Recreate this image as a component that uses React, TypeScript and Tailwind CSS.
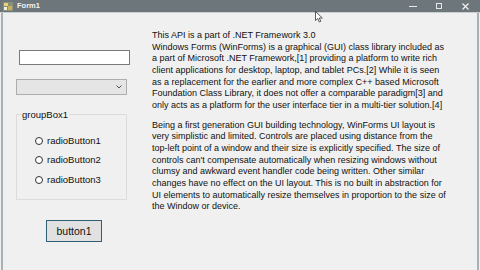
import React from "react";

const p1 = [
  "This API is a part of .NET Framework 3.0",
  "Windows Forms (WinForms) is a graphical (GUI) class library included as",
  "a part of Microsoft .NET Framework,[1] providing a platform to write rich",
  "client applications for desktop, laptop, and tablet PCs.[2] While it is seen",
  "as a replacement for the earlier and more complex C++ based Microsoft",
  "Foundation Class Library, it does not offer a comparable paradigm[3] and",
  "only acts as a platform for the user interface tier in a multi-tier solution.[4]",
];
const p2 = [
  "Being a first generation GUI building technology, WinForms UI layout is",
  "very simplistic and limited. Controls are placed using distance from the",
  "top-left point of a window and their size is explicitly specified. The size of",
  "controls can't compensate automatically when resizing windows without",
  "clumsy and awkward event handler code being written. Other similar",
  "changes have no effect on the UI layout. This is no built in abstraction for",
  "UI elements to automatically resize themselves in proportion to the size of",
  "the Window or device.",
];

function Radio({ label }: { label: string }) {
  return (
    <div className="flex items-center h-[11px]">
      <span className="w-[8px] h-[8px] rounded-full border border-[#333] bg-white" />
      <span className="ml-[4px]">{label}</span>
    </div>
  );
}

export default function App() {
  return (
    <div
      className="relative w-[480px] h-[270px] bg-[#f0f0f0] flex flex-col overflow-hidden text-[#111]"
      style={{ fontFamily: '"Liberation Sans", Arial, sans-serif' }}
    >
      {/* title bar */}
      <div className="h-[13px] bg-[#6d767b] flex items-center border-b border-[#c9ced1]">
        <svg className="ml-[3px]" width="10" height="9" viewBox="0 0 10 9">
          <rect x="0" y="0" width="10" height="9" fill="#8a8f7a" />
          <rect x="1" y="1" width="4" height="3" fill="#e8d27a" />
          <rect x="5" y="4" width="4" height="4" fill="#c9b25a" />
          <rect x="1" y="5" width="3" height="3" fill="#f0f0e0" />
        </svg>
        <span className="ml-[4px] text-[7.5px] leading-none text-[#f4f4f4] font-bold">Form1</span>
        <div className="ml-auto flex items-center h-full">
          <div className="w-[8px] h-[1px] bg-[#e8e8e8] mr-[19px] mt-[1px]" />
          <div className="w-[6px] h-[6px] border border-[#e8e8e8] mr-[20px]" />
          <svg width="7" height="7" viewBox="0 0 7 7" className="mr-[11px]">
            <path d="M0.5 0.5 L6.5 6.5 M6.5 0.5 L0.5 6.5" stroke="#f0f0f0" strokeWidth="1.2" />
          </svg>
        </div>
      </div>
      {/* body */}
      <div className="flex-1 flex border-l-2 border-r-2 border-[#aab1b6] ml-[1px] mr-[1px] text-[9.5px] leading-[11.67px]">
        <div className="w-[149px] flex flex-col items-start">
          <div className="ml-[16px] mt-[37px] w-[111px] h-[15px] bg-white border border-[#7a7a7a]" />
          <div className="ml-[13px] mt-[14px] w-[111px] h-[16px] bg-[#e5e5e5] border border-[#adadad] flex items-center justify-end pr-[4px]">
            <svg width="6" height="4" viewBox="0 0 6 4">
              <path d="M0.5 0.5 L3 3 L5.5 0.5" stroke="#555" fill="none" strokeWidth="1" />
            </svg>
          </div>
          <fieldset className="ml-[13px] mt-[14px] w-[111px] border border-[#dcdcdc]">
            <legend className="ml-[4px] px-[1px] leading-[11px]">groupBox1</legend>
            <div className="pl-[18px] pt-[15px] pb-[14px] flex flex-col gap-[8.6px]">
              <Radio label="radioButton1" />
              <Radio label="radioButton2" />
              <Radio label="radioButton3" />
            </div>
          </fieldset>
          <button className="ml-[43px] mt-[20px] w-[56px] h-[22px] bg-[#e1e1e1] border border-[#2f5f73] text-[10.5px] leading-none text-[#111]">
            button1
          </button>
        </div>
        <div className="pt-[17px] whitespace-nowrap text-[9px]">
          {p1.map((l, i) => (
            <div key={i}>{l}</div>
          ))}
          <div className="h-[8px]" />
          {p2.map((l, i) => (
            <div key={i}>{l}</div>
          ))}
        </div>
      </div>
      {/* cursor */}
      <svg className="absolute left-[315px] top-[11px]" width="8" height="12" viewBox="0 0 8 12">
        <path d="M0.5 0.5 L0.5 9.5 L2.8 7.5 L4.3 11 L5.8 10.3 L4.3 7 L7.3 7 Z" fill="#fff" stroke="#333" strokeWidth="0.8" />
      </svg>
    </div>
  );
}
